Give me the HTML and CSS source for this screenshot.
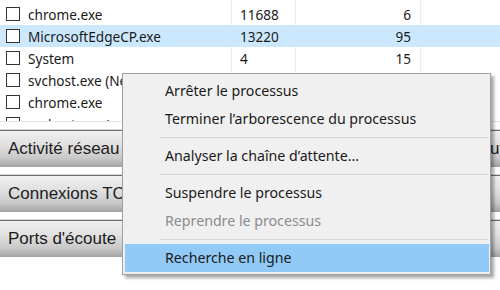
FILE: index.html
```html
<!DOCTYPE html>
<html lang="fr">
<head>
<meta charset="utf-8">
<link rel="stylesheet" href="styles.css">
</head>
<body>
<div class="page">
  <div class="table">
    <div class="row"><div class="name"><span class="check"></span>chrome.exe</div><div class="pid">11688</div><div class="num">6</div><div></div></div>
    <div class="row selected"><div class="name"><span class="check"></span>MicrosoftEdgeCP.exe</div><div class="pid">13220</div><div class="num">95</div><div></div></div>
    <div class="row"><div class="name"><span class="check"></span>System</div><div class="pid">4</div><div class="num">15</div><div></div></div>
    <div class="row"><div class="name"><span class="check"></span>svchost.exe (NetworkService)</div><div class="pid">1340</div><div class="num">12</div><div></div></div>
    <div class="row"><div class="name"><span class="check"></span>chrome.exe</div><div class="pid">9876</div><div class="num">4</div><div></div></div>
    <div class="row"><div class="name"><span class="check"></span>svchost.exe (netsvcs)</div><div class="pid">1024</div><div class="num">3</div><div></div></div>
  </div>
  <div class="sections">
    <div class="bar"><span class="label">Activité réseau</span><span class="summary">0% de l'utilisation du réseau</span></div>
    <div class="bar"><span class="label">Connexions TCP</span></div>
    <div class="bar"><span class="label">Ports d'écoute</span></div>
  </div>
  <div class="menu">
    <div class="item">Arrêter le processus</div>
    <div class="item">Terminer l’arborescence du processus</div>
    <div class="sep"></div>
    <div class="item">Analyser la chaîne d’attente...</div>
    <div class="sep"></div>
    <div class="item">Suspendre le processus</div>
    <div class="item disabled">Reprendre le processus</div>
    <div class="sep"></div>
    <div class="item active">Recherche en ligne</div>
  </div>
</div>
</body>
</html>
```
FILE: styles.css
```css
html, body {
  margin: 0;
  padding: 0;
  background: #ffffff;
}
body {
  width: 500px;
  height: 290px;
  overflow: hidden;
}
.page {
  position: relative;
  width: 500px;
  height: 290px;
  overflow: hidden;
}
.table {
  height: 122px;
  overflow: hidden;
  padding-top: 3px;
  box-sizing: border-box;
  border-bottom: 1px solid #e4e4e4;
  font-family: "Noto Sans", sans-serif;
  font-size: 13.6px;
  color: #1a1a1a;
  background:
    linear-gradient(#ececec, #ececec) 231px 0 / 1px 100% no-repeat,
    linear-gradient(#ececec, #ececec) 295px 0 / 1px 100% no-repeat,
    linear-gradient(#ececec, #ececec) 420px 0 / 1px 100% no-repeat,
    #ffffff;
}
.row {
  display: grid;
  grid-template-columns: 232px 64px 125px 1fr;
  height: 22px;
  align-items: center;
  white-space: nowrap;
}
.row.selected {
  background: #cce8ff;
}
.name {
  display: flex;
  align-items: center;
  overflow: hidden;
}
.check {
  width: 12px;
  height: 12px;
  border: 1px solid #333333;
  background: #ffffff;
  margin: 0 8px 0 6px;
  flex: none;
}
.pid {
  padding-left: 8px;
}
.num {
  text-align: right;
  padding-right: 10px;
}
.bar {
  display: flex;
  align-items: center;
  margin-top: 8px;
  height: 36px;
  border-top: 1px solid #6e6e6e;
  box-shadow: 0 -1px 0 #d4d4d4;
  background: linear-gradient(to bottom, #f0f0f0 0%, #e0e0e0 40%, #c9c9c9 75%, #a2a2a2 100%);
  font-family: "Liberation Sans", Arial, sans-serif;
  font-size: 17px;
  color: #1c1c1c;
  white-space: nowrap;
  overflow: hidden;
}
.label {
  width: 422px;
  padding-left: 8px;
  flex: none;
}
.summary {
  flex: none;
}
.menu {
  position: absolute;
  left: 122px;
  top: 73px;
  width: 364px;
  padding: 3px 1px 2px 2px;
  background: #f0f0f0;
  border: 1px solid #a0a0a0;
  box-shadow: 3px 3px 3px rgba(0, 0, 0, 0.35);
  font-family: "Noto Sans", sans-serif;
  font-size: 14.2px;
  color: #1a1a1a;
}
.item {
  height: 28px;
  line-height: 28px;
  padding-left: 40px;
  white-space: nowrap;
}
.item.disabled {
  color: #8c8c8c;
}
.item.active {
  background: #91c9f7;
}
.sep {
  height: 9px;
  margin-left: 35px;
  margin-right: 1px;
  background: linear-gradient(#d7d7d7, #d7d7d7) 0 4px / 100% 1px no-repeat;
}
```
